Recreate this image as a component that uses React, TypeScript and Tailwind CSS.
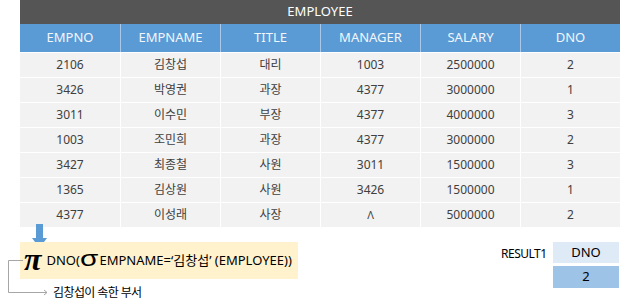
const cols = ["EMPNO", "EMPNAME", "TITLE", "MANAGER", "SALARY", "DNO"];

const rows = [
  ["2106", "김창섭", "대리", "1003", "2500000", "2"],
  ["3426", "박영권", "과장", "4377", "3000000", "1"],
  ["3011", "이수민", "부장", "4377", "4000000", "3"],
  ["1003", "조민희", "과장", "4377", "3000000", "2"],
  ["3427", "최종철", "사원", "3011", "1500000", "3"],
  ["1365", "김상원", "사원", "3426", "1500000", "1"],
  ["4377", "이성래", "사장", "^", "5000000", "2"],
];

const font = { fontFamily: '"Noto Sans", "Noto Sans CJK KR", sans-serif' };

export default function App() {
  return (
    <div className="relative w-[641px] h-[308px] bg-white overflow-hidden" style={font}>
      {/* 테이블 */}
      <div className="ml-[20px] w-[600px]">
        <div className="h-[24px] bg-[#555555] text-white text-[13px] flex items-center justify-center">
          EMPLOYEE
        </div>
        <div className="grid grid-cols-6 h-[28px] bg-[#5b9bd5]">
          {cols.map((c, i) => (
            <div
              key={c}
              className={`flex items-center justify-center text-[13px] text-[#f2f6fb] ${i > 0 ? "border-l border-[#a9c9ea]" : ""}`}
            >
              {c}
            </div>
          ))}
        </div>
        {rows.map((r, ri) => (
          <div key={ri} className="grid grid-cols-6 h-[25px] border-t border-white bg-[#f2f2f2]">
            {r.map((v, ci) => (
              <div
                key={ci}
                className={`flex items-center justify-center text-[12px] text-[#404040] ${ci > 0 ? "border-l border-white" : ""}`}
              >
                {v === "^" ? <span className="text-[11px]">&#x39B;</span> : v}
              </div>
            ))}
          </div>
        ))}
      </div>

      {/* 아래쪽 화살표 */}
      <svg className="absolute left-[32px] top-[224px]" width="16" height="25" viewBox="0 0 16 25">
        <rect x="4" y="0" width="7" height="15" fill="#5b9bd5" />
        <polygon points="0,14 15,14 7.5,24" fill="#5b9bd5" />
      </svg>

      {/* 관계대수 식 */}
      <div className="absolute left-[20px] top-[242px] w-[278px] h-[37px] bg-[#fff2cc] flex items-center pl-[4px] text-[13px] text-black">
        <span className="text-[32px] italic font-bold leading-none mr-[5px] -mt-[3px]" style={{ fontFamily: '"Liberation Serif", serif' }}>
          &pi;
        </span>
        <span>DNO(</span>
        <span
          className="inline-block text-[22px] leading-none -mt-[3px] mr-[6px] scale-x-[1.35] origin-left"
          style={{ fontFamily: '"Liberation Sans", sans-serif' }}
        >
          &sigma;
        </span>
        <span>EMPNAME=&lsquo;김창섭&rsquo; (EMPLOYEE))</span>
      </div>

      {/* 연결선 */}
      <svg className="absolute left-[6px] top-[258px]" width="44" height="38" viewBox="0 0 44 38">
        <polyline points="17,2.5 2.5,2.5 2.5,34.5 41,34.5" fill="none" stroke="#a6a6a6" strokeWidth="1" />
        <polyline points="38,32 41,34.5 38,37" fill="none" stroke="#a6a6a6" strokeWidth="1" />
      </svg>
      <div className="absolute left-[53px] top-[284px] text-[12px] tracking-[-0.6px] text-black">김창섭이 속한 부서</div>

      {/* 결과 */}
      <div className="absolute left-[501px] top-[245px] text-[12px] text-black tracking-[-0.5px]">RESULT1</div>
      <div className="absolute left-[553px] top-[242px] w-[66px]">
        <div className="h-[21px] bg-[#deebf7] flex items-center justify-center text-[13px] text-black">DNO</div>
        <div className="h-[22px] mt-[3px] bg-[#9dc3e6] flex items-center justify-center text-[13px] text-black">2</div>
      </div>
    </div>
  );
}
